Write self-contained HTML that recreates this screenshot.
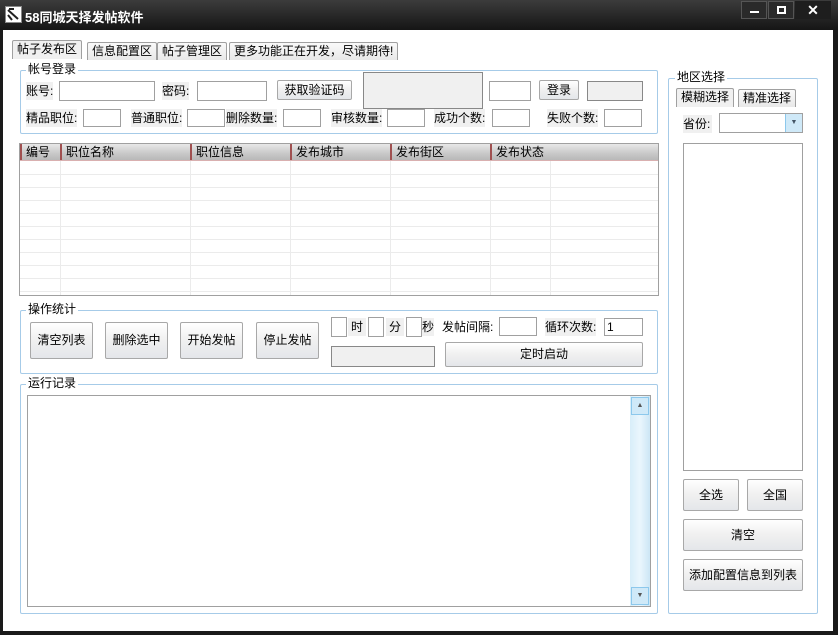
<!DOCTYPE html>
<html><head><meta charset="utf-8"><style>
*{margin:0;padding:0;box-sizing:border-box}
body{width:838px;height:635px;background:#1a1a1a;position:relative;overflow:hidden;font-family:"Liberation Sans","Noto Sans CJK SC","WenQuanYi Zen Hei",sans-serif;font-size:12px;color:#000}
.a{position:absolute}
.title{left:0;top:0;width:838px;height:30px;background:linear-gradient(#3c3c3c,#151515);}
.title span{position:absolute;left:25px;top:7px;color:#fff;font-weight:bold;font-size:13px}
.main{left:3px;top:30px;width:830px;height:601px;background:#fff}
.tb{background:linear-gradient(#fff,#f0f0f0 50%,#e4e6ea);border:1px solid #a8a8a8;border-radius:2px;text-align:center}
.inp{border:1px solid #a0a0a0;background:#fff}
.gb{border:1px solid #a6cbe8;border-radius:2px}
.leg{background:#fff;padding:0 2px;line-height:13px}
.lbl{background:#f0f0f0;line-height:18px}
.tab{border:1px solid #a0a0a0;border-bottom:none;background:linear-gradient(#fafafa,#e8e8e8);line-height:17px;padding:0 4px;border-radius:2px 2px 0 0}
.hl{left:0;width:100%;height:1px;background:#ebebeb}
.vl{top:17px;width:1px;bottom:0;background:#ebebeb}
.hd{top:0;line-height:16px;padding-left:4px;border-left:2px solid #a05050;}
</style></head><body>
<div class="a title"><svg class="a" style="left:5px;top:6px" width="17" height="17"><rect x="0.5" y="0.5" width="16" height="16" fill="#fff" stroke="#888"/><path d="M3 4 L13 13 M4 3 L9 3 M3 9 L7 14" stroke="#222" stroke-width="2"/></svg><span>58同城天择发帖软件</span>
<div class="a" style="left:741px;top:1px;width:26px;height:18px;border:1px solid #555;background:#2a2a2a"><div class="a" style="left:8px;top:9px;width:9px;height:2px;background:#fff"></div></div>
<div class="a" style="left:768px;top:1px;width:26px;height:18px;border:1px solid #555;background:#2a2a2a"><div class="a" style="left:8px;top:4px;width:9px;height:8px;border:2px solid #fff"></div></div>
<div class="a" style="left:795px;top:1px;width:36px;height:18px;background:#1e1e1e;color:#fff;font-weight:bold;font-size:14px;text-align:center;line-height:18px">✕</div>
</div>
<div class="a main"></div>

<div class="a tab" style="left:12px;top:40px;height:19px;background:#f0f0f0">帖子发布区</div>
<div class="a tab" style="left:87px;top:42px">信息配置区</div>
<div class="a tab" style="left:157px;top:42px">帖子管理区</div>
<div class="a tab" style="left:229px;top:42px">更多功能正在开发，尽请期待!</div>

<div class="a gb" style="left:20px;top:70px;width:638px;height:64px"></div>
<div class="a leg" style="left:26px;top:63px">帐号登录</div>
<div class="a lbl" style="left:26px;top:82px">账号:</div><div class="a inp" style="left:59px;top:81px;width:96px;height:20px"></div>
<div class="a lbl" style="left:162px;top:82px">密码:</div><div class="a inp" style="left:197px;top:81px;width:70px;height:20px"></div>
<div class="a tb" style="left:277px;top:80px;width:75px;height:20px;line-height:18px">获取验证码</div>
<div class="a" style="left:363px;top:72px;width:120px;height:37px;border:1px solid #888;background:#f0f0f0"></div>
<div class="a inp" style="left:489px;top:81px;width:42px;height:20px"></div>
<div class="a tb" style="left:539px;top:80px;width:40px;height:20px;line-height:18px">登录</div>
<div class="a" style="left:587px;top:81px;width:56px;height:20px;border:1px solid #888;background:#f0f0f0"></div>
<div class="a lbl" style="left:26px;top:109px">精品职位:</div><div class="a inp" style="left:83px;top:109px;width:38px;height:18px"></div>
<div class="a lbl" style="left:131px;top:109px">普通职位:</div><div class="a inp" style="left:187px;top:109px;width:38px;height:18px"></div>
<div class="a lbl" style="left:226px;top:109px">删除数量:</div><div class="a inp" style="left:283px;top:109px;width:38px;height:18px"></div>
<div class="a lbl" style="left:331px;top:109px">审核数量:</div><div class="a inp" style="left:387px;top:109px;width:38px;height:18px"></div>
<div class="a lbl" style="left:434px;top:109px">成功个数:</div><div class="a inp" style="left:492px;top:109px;width:38px;height:18px"></div>
<div class="a lbl" style="left:547px;top:109px">失败个数:</div><div class="a inp" style="left:604px;top:109px;width:38px;height:18px"></div>

<div class="a" style="left:19px;top:143px;width:640px;height:153px;border:1px solid #a0a0a0;overflow:hidden">
<div class="a" style="left:0;top:0;width:638px;height:17px;background:linear-gradient(#e8e8e8,#c8c8c8 60%,#b8b8b8);border-bottom:1px solid #d9b0b0"></div>
<div class="a hd" style="left:0">编号</div><div class="a hd" style="left:40px">职位名称</div><div class="a hd" style="left:170px">职位信息</div><div class="a hd" style="left:270px">发布城市</div><div class="a hd" style="left:370px">发布街区</div><div class="a hd" style="left:470px">发布状态</div>
<div class="a hl" style="top:30px"></div><div class="a hl" style="top:43px"></div><div class="a hl" style="top:56px"></div><div class="a hl" style="top:69px"></div><div class="a hl" style="top:82px"></div><div class="a hl" style="top:95px"></div><div class="a hl" style="top:108px"></div><div class="a hl" style="top:121px"></div><div class="a hl" style="top:134px"></div><div class="a hl" style="top:147px"></div>
<div class="a vl" style="left:40px"></div><div class="a vl" style="left:170px"></div><div class="a vl" style="left:270px"></div><div class="a vl" style="left:370px"></div><div class="a vl" style="left:470px"></div><div class="a vl" style="left:530px"></div>
</div>

<div class="a gb" style="left:20px;top:310px;width:638px;height:64px"></div>
<div class="a leg" style="left:26px;top:303px">操作统计</div>
<div class="a tb" style="left:30px;top:322px;width:63px;height:37px;line-height:35px">清空列表</div>
<div class="a tb" style="left:105px;top:322px;width:63px;height:37px;line-height:35px">删除选中</div>
<div class="a tb" style="left:180px;top:322px;width:63px;height:37px;line-height:35px">开始发帖</div>
<div class="a tb" style="left:256px;top:322px;width:63px;height:37px;line-height:35px">停止发帖</div>
<div class="a inp" style="left:331px;top:317px;width:16px;height:20px"></div><div class="a lbl" style="left:348px;top:318px;padding:0 3px">时</div>
<div class="a inp" style="left:368px;top:317px;width:16px;height:20px"></div><div class="a lbl" style="left:386px;top:318px;padding:0 3px">分</div>
<div class="a inp" style="left:406px;top:317px;width:16px;height:20px"></div><div class="a lbl" style="left:422px;top:318px">秒</div>
<div class="a" style="left:442px;top:318px;line-height:18px">发帖间隔:</div><div class="a inp" style="left:499px;top:317px;width:38px;height:19px"></div>
<div class="a lbl" style="left:545px;top:318px">循环次数:</div><div class="a inp" style="left:604px;top:318px;width:39px;height:18px;padding-left:2px;line-height:16px">1</div>
<div class="a" style="left:331px;top:346px;width:104px;height:21px;border:1px solid #888;background:#f0f0f0"></div>
<div class="a tb" style="left:445px;top:342px;width:198px;height:25px;line-height:23px">定时启动</div>

<div class="a gb" style="left:20px;top:384px;width:638px;height:230px"></div>
<div class="a leg" style="left:26px;top:377px">运行记录</div>
<div class="a" style="left:27px;top:395px;width:624px;height:212px;border:1px solid #a0a0a0">
<div class="a" style="right:0;top:0;width:20px;height:210px;background:linear-gradient(90deg,#d8eef9,#eaf6fd,#cce6f5)"></div>
<div class="a" style="right:1px;top:1px;width:18px;height:18px;border:1px solid #8cc8ec;background:#cfe9f8;font-size:7px;text-align:center;line-height:16px;color:#555">▲</div>
<div class="a" style="right:1px;bottom:1px;width:18px;height:18px;border:1px solid #8cc8ec;background:#cfe9f8;font-size:7px;text-align:center;line-height:16px;color:#555">▼</div>
</div>

<div class="a gb" style="left:668px;top:78px;width:150px;height:536px"></div>
<div class="a leg" style="left:675px;top:71px">地区选择</div>
<div class="a tab" style="left:676px;top:88px;height:19px;background:#f0f0f0">模糊选择</div>
<div class="a tab" style="left:738px;top:89px;height:18px">精准选择</div>
<div class="a lbl" style="left:683px;top:115px;padding-right:2px">省份:</div>
<div class="a" style="left:719px;top:113px;width:84px;height:20px;border:1px solid #a0a0a0;background:#fff"><div class="a" style="right:0;top:0;width:17px;height:18px;background:#cfe9f8;border-left:1px solid #8cc8ec;font-size:7px;text-align:center;line-height:18px;color:#456">▼</div></div>
<div class="a inp" style="left:683px;top:143px;width:120px;height:328px"></div>
<div class="a tb" style="left:683px;top:479px;width:56px;height:32px;line-height:30px">全选</div>
<div class="a tb" style="left:747px;top:479px;width:56px;height:32px;line-height:30px">全国</div>
<div class="a tb" style="left:683px;top:519px;width:120px;height:32px;line-height:30px">清空</div>
<div class="a tb" style="left:683px;top:559px;width:120px;height:32px;line-height:30px">添加配置信息到列表</div>
</body></html>
